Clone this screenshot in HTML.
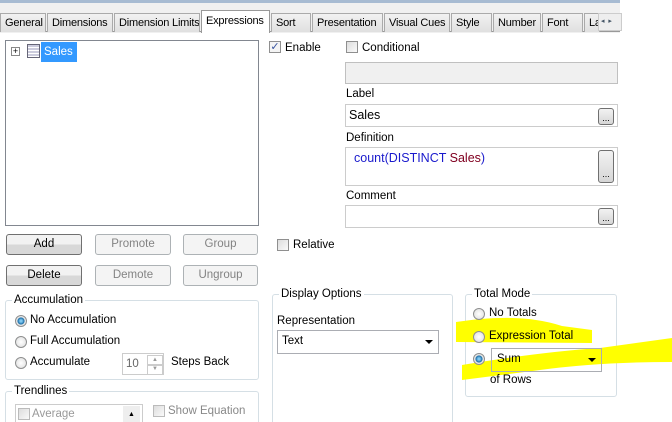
<!DOCTYPE html><html><head><style>
html,body{margin:0;width:672px;height:422px;overflow:hidden}
body{background:#fff;position:relative;font-family:"Liberation Sans",sans-serif;font-size:11.5px;line-height:17px;color:#000}
.a{position:absolute;white-space:nowrap}
.tab{position:absolute;top:13px;height:19px;border:1px solid #aaa;border-bottom:none;background:linear-gradient(#f2f2f2,#e0e0e0);line-height:19px;padding-left:4px;box-sizing:border-box;font-size:11px;white-space:nowrap;overflow:hidden;letter-spacing:-0.2px}
.box{position:absolute;border:1px solid #abadb3;background:#fff;box-sizing:border-box}
.cb{position:absolute;width:12px;height:12px;border:1px solid #8f8f8f;background:linear-gradient(135deg,#ddd,#fafafa);box-sizing:border-box}
.btn{position:absolute;height:21px;border:1px solid #707070;border-radius:3px;background:linear-gradient(#f2f2f2 50%,#d8d8d8 50%);text-align:center;line-height:19px;box-sizing:border-box}
.dis{border-color:#adb2b5;background:#f4f4f4;color:#838383}
.dot{position:absolute;width:16px;height:21px;border:1px solid #707070;border-radius:3px;background:linear-gradient(#f2f2f2,#d6d6d6);box-sizing:border-box;font-size:9px;text-align:center;line-height:26px}
.grp{position:absolute;border:1px solid #d5dfe5;border-radius:3px;box-sizing:border-box}
.gt{position:absolute;top:-9px;left:6px;background:#fff;padding:0 2px;white-space:nowrap}
.rd{position:absolute;width:12px;height:12px;border-radius:50%;border:1px solid #8e8f8f;background:radial-gradient(#fff,#dcdcdc);box-sizing:border-box}
.rd.on{background:radial-gradient(#7ec8f0 15%,#1b6ea8 45%,#e8e8e8 55%)}
.sel{position:absolute;border:1px solid #abadb3;background:#fff;box-sizing:border-box;padding-left:4px;line-height:21px}
.arr{position:absolute;right:5px;top:9px;width:0;height:0;border-left:4px solid transparent;border-right:4px solid transparent;border-top:4px solid #000}
</style></head><body>
<div class="a" style="left:0;top:0;width:620px;height:3px;background:#a7bbd2"></div>
<div class="a" style="left:0;top:3px;width:620px;height:30px;background:#f0f0f0"></div>
<div class="a" style="left:0;top:31px;width:620px;height:1px;background:#999"></div>
<div class="tab" style="left:0;width:46px">General</div>
<div class="tab" style="left:47px;width:66px">Dimensions</div>
<div class="tab" style="left:114px;width:86px">Dimension Limits</div>
<div class="tab" style="left:201px;top:10px;height:23px;width:69px;background:#fff;border-color:#999;line-height:21px">Expressions</div>
<div class="tab" style="left:271px;width:40px">Sort</div>
<div class="tab" style="left:312px;width:71px">Presentation</div>
<div class="tab" style="left:384px;width:66px">Visual Cues</div>
<div class="tab" style="left:451px;width:41px">Style</div>
<div class="tab" style="left:493px;width:48px">Number</div>
<div class="tab" style="left:542px;width:41px">Font</div>
<div class="tab" style="left:584px;width:16px">La</div>
<div class="a" style="left:598px;top:13px;width:22px;height:16px;border:1px solid #ccc;background:#eee;font-size:7px;color:#456;line-height:16px">&nbsp;◂&nbsp;&nbsp;▸</div>
<div class="box" style="left:5px;top:40px;width:254px;height:186px;border-color:#828790"></div>
<div class="a" style="left:11px;top:47px;width:7px;height:7px;border:1px solid #888;font-size:9px;line-height:7px;text-align:center">+</div>
<div class="a" style="left:27px;top:44px;width:11px;height:12px;border:1px solid #667;background:repeating-linear-gradient(#ccd 0 2px,#fff 2px 3px)"></div>
<div class="a" style="left:41px;top:42px;width:36px;height:20px;background:#3399ff;color:#fff;line-height:20px;padding-left:3px;box-sizing:border-box">Sales</div>
<div class="cb" style="left:269px;top:41px;background:#f4f4f4;color:#3a55a0;font-size:11px;line-height:10px;text-align:center">✓</div>
<div class="a" style="left:285px;top:40px">Enable</div>
<div class="cb" style="left:346px;top:41px"></div>
<div class="a" style="left:362px;top:40px">Conditional</div>
<div class="box" style="left:345px;top:62px;width:273px;height:22px;background:#f0f0f0;border-color:#c0c0c0"></div>
<div class="a" style="left:346px;top:86px">Label</div>
<div class="box" style="left:345px;top:104px;width:273px;height:23px;border-color:#ccc"><span style="position:absolute;left:3px;top:2px;font-size:12.5px">Sales</span></div>
<div class="dot" style="left:598px;top:108px;height:17px;line-height:18px">...</div>
<div class="a" style="left:346px;top:130px">Definition</div>
<div class="box" style="left:345px;top:147px;width:273px;height:39px;border-color:#ccc"><span style="position:absolute;left:8px;top:2px;font-size:12.5px;color:#1a1acc">count(DISTINCT <span style="color:#800020">Sales</span>)</span></div>
<div class="dot" style="left:598px;top:150px;height:33px;line-height:46px">...</div>
<div class="a" style="left:346px;top:188px">Comment</div>
<div class="box" style="left:345px;top:205px;width:273px;height:23px;border-color:#ccc"></div>
<div class="dot" style="left:598px;top:208px;height:17px;line-height:18px">...</div>
<div class="cb" style="left:277px;top:239px"></div>
<div class="a" style="left:293px;top:237px">Relative</div>
<div class="btn" style="left:6px;top:234px;width:76px">Add</div>
<div class="btn dis" style="left:95px;top:234px;width:76px">Promote</div>
<div class="btn dis" style="left:183px;top:234px;width:75px">Group</div>
<div class="btn" style="left:6px;top:265px;width:76px">Delete</div>
<div class="btn dis" style="left:95px;top:265px;width:76px">Demote</div>
<div class="btn dis" style="left:183px;top:265px;width:75px">Ungroup</div>
<div class="grp" style="left:5px;top:300px;width:254px;height:80px"><span class="gt">Accumulation</span></div>
<div class="rd on" style="left:15px;top:315px"></div><div class="a" style="left:30px;top:312px">No Accumulation</div>
<div class="rd" style="left:15px;top:336px"></div><div class="a" style="left:30px;top:333px">Full Accumulation</div>
<div class="rd" style="left:15px;top:357px"></div><div class="a" style="left:30px;top:354px">Accumulate</div>
<div class="box" style="left:122px;top:353px;width:42px;height:22px;border-color:#ccc;color:#666"><span style="position:absolute;left:3px;top:2px">10</span><div style="position:absolute;left:24px;top:1px;width:14px;height:9px;border:1px solid #ccc;font-size:6px;line-height:9px;text-align:center;color:#999">▲</div><div style="position:absolute;left:24px;top:10px;width:14px;height:9px;border:1px solid #ccc;font-size:6px;line-height:9px;text-align:center;color:#999">▼</div></div>
<div class="a" style="left:171px;top:354px">Steps Back</div>
<div class="grp" style="left:5px;top:391px;width:254px;height:40px"><span class="gt">Trendlines</span></div>
<div class="box" style="left:15px;top:404px;width:128px;height:22px;border-color:#ccc"><div class="cb" style="left:2px;top:3px;border-color:#bbb"></div><span style="position:absolute;left:16px;top:1px;color:#999">Average</span><div style="position:absolute;left:107px;top:1px;width:17px;height:18px;background:#eee;font-size:7px;text-align:center;line-height:18px">▲</div></div>
<div class="cb" style="left:153px;top:405px;border-color:#bbb"></div>
<div class="a" style="left:168px;top:403px;color:#888">Show Equation</div>
<div class="grp" style="left:272px;top:294px;width:181px;height:140px"><span class="gt">Display Options</span></div>
<div class="a" style="left:277px;top:313px">Representation</div>
<div class="sel" style="left:277px;top:330px;width:162px;height:24px">Text<div class="arr"></div></div>
<div class="grp" style="left:465px;top:294px;width:152px;height:103px"><span class="gt">Total Mode</span></div>
<svg class="a" style="left:0;top:0" width="672" height="422"><path d="M456 322 Q 520 312 562 326 L 592 330 L 592 343 L 456 342 Z" fill="#ffff00"/><path d="M462 365 Q 540 352 600 348 L 672 338 L 672 362 Q 600 362 540 370 L 462 380 Z" fill="#ffff00"/></svg>
<div class="rd" style="left:473px;top:308px"></div><div class="a" style="left:489px;top:305px">No Totals</div>
<div class="rd" style="left:473px;top:331px"></div><div class="a" style="left:489px;top:328px">Expression Total</div>
<div class="rd on" style="left:473px;top:353px"></div>
<div class="sel" style="left:491px;top:348px;width:111px;height:24px;background:transparent;padding-left:5px">Sum<div class="arr"></div></div>
<div class="a" style="left:490px;top:372px">of Rows</div>
</body></html>
